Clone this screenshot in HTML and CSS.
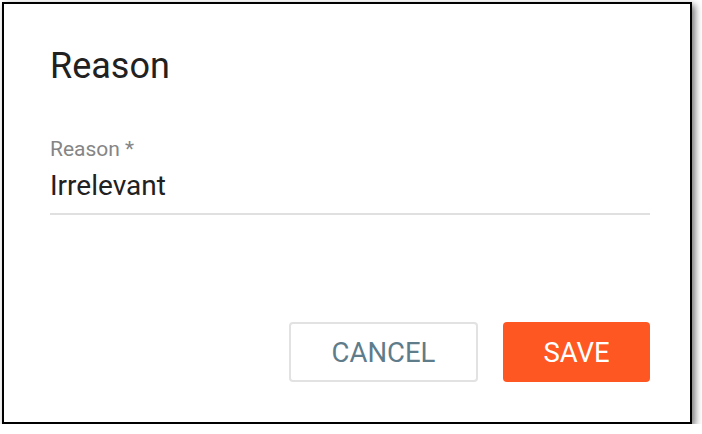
FILE: index.html
```html
<!DOCTYPE html>
<html lang="en">
<head>
<meta charset="utf-8">
<title>Reason</title>
<link rel="stylesheet" href="styles.css">
</head>
<body>
  <div class="dialog">
    <h2 class="dialog-title">Reason</h2>
    <div class="field">
      <label class="field-label">Reason *</label>
      <div class="field-input">Irrelevant</div>
    </div>
    <div class="actions">
      <button class="btn btn-cancel">CANCEL</button>
      <button class="btn btn-save">SAVE</button>
    </div>
  </div>
</body>
</html>
```

FILE: styles.css
```css
html, body {
  margin: 0;
  padding: 0;
  background: #ffffff;
}

body {
  font-family: Roboto, "Liberation Sans", Arial, sans-serif;
  padding: 2px 0 0 2px;
}

.dialog {
  box-sizing: border-box;
  width: 690px;
  height: 422px;
  border: 2px solid #000;
  background: #fff;
  box-shadow: 3px 3px 7px rgba(0, 0, 0, 0.55);
  padding: 42px 0 0 46px;
  display: flex;
  flex-direction: column;
}

.dialog-title {
  margin: 0;
  font-size: 36px;
  line-height: 40px;
  font-weight: 400;
  color: #212121;
}

.field {
  width: 600px;
  margin-top: 51px;
  display: flex;
  flex-direction: column;
  border-bottom: 2px solid #e0e0e0;
  padding-bottom: 11px;
}

.field-label {
  font-size: 21px;
  line-height: 24px;
  color: #858585;
}

.field-input {
  margin-top: 9px;
  font-size: 28px;
  line-height: 32px;
  color: #212121;
}

.actions {
  width: 600px;
  margin-top: 107px;
  display: flex;
  justify-content: flex-end;
  gap: 25px;
}

.btn {
  box-sizing: border-box;
  height: 60px;
  border-radius: 4px;
  font-family: Roboto, "Liberation Sans", Arial, sans-serif;
  font-size: 27.5px;
  font-weight: 400;
  display: flex;
  align-items: center;
  justify-content: center;
  padding: 0;
  cursor: pointer;
}

.btn-cancel {
  width: 189px;
  background: #fff;
  border: 2px solid #e2e2e2;
  color: #5f7c8a;
}

.btn-save {
  width: 147px;
  background: #ff5722;
  border: none;
  color: #fff;
}
```
